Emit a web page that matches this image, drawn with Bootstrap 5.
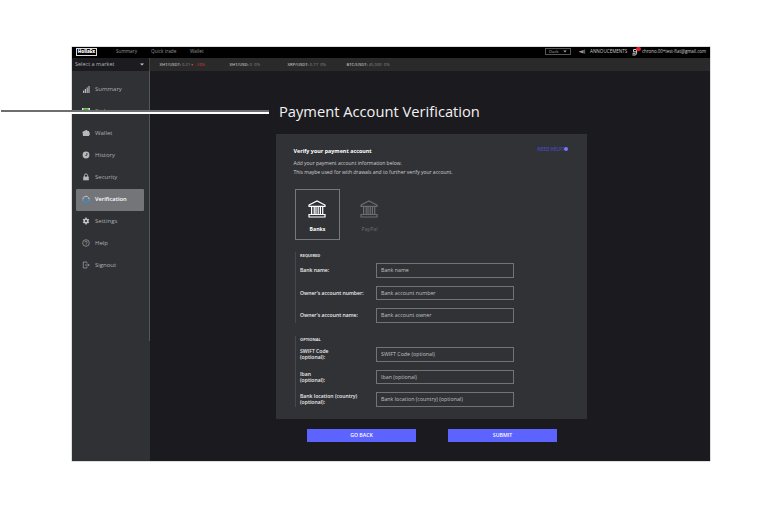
<!DOCTYPE html>
<html lang="en">
<head>
<meta charset="utf-8">
<meta name="viewport" content="width=device-width, initial-scale=1">
<title>Payment Account Verification</title>
<link href="https://cdn.jsdelivr.net/npm/bootstrap@5.3.0/dist/css/bootstrap.min.css" rel="stylesheet">
<style>
body{font-family:"Open Sans","Noto Sans",sans-serif;font-size:5px;line-height:7px;background:#fff;overflow:hidden;height:508px}
.frame{width:638px;height:414px;margin:47px 0 0 72px;background:#1b1a1f;color:#e4e4e5;box-shadow:0 0 0 .5px #bbb}
.topbar{height:11px;background:#000;color:#989898;padding:0 4px 2px}
.logo{width:21px;height:8px;border:1px solid #ddd;color:#fff;font-size:4.5px;font-weight:800;line-height:5.5px;text-align:center;margin-right:19px}
.topbar .lnk{font-size:4.7px;line-height:9px}
.lnk-a{width:35px}
.lnk-b{width:39px}
.theme{width:26px;height:7px;border:1px solid #555;font-size:4.3px;line-height:5px;padding:0 3px;color:#aaa}
.topbar #ann{margin-left:4px;width:42px;color:#ccc;font-size:4.6px}
.bell{width:9px;height:8px;line-height:0}
.bell i{position:absolute;left:4px;top:-1px;width:4.5px;height:4.5px;border-radius:50%;background:#e8202a}
.topbar #mail{width:64px;margin-left:1px;color:#ccc;white-space:nowrap;font-size:4.4px}
.ticker{height:13px;background:#2a2a2a;color:#8d8d8e;font-size:4.15px}
.market{width:78px;height:13px;background:#1c1b20;border-right:1px solid #444;font-size:5.5px;color:#b2b2b3;padding:0 5px 0 3px}
.tick{white-space:nowrap}
.tick b{color:#bbb;font-weight:600}
#t1{width:70px;margin-left:9.5px}
#t1 em{color:#e03b36;font-style:normal}
#t2{width:58px}
#t3{width:59px}
.side{width:78px;background:#303135;padding:7.5px 6px 0 4px;position:relative}
.side:after{content:"";position:absolute;right:0;top:0;width:1px;height:270px;background:#55565a}
.side .item{height:22px;padding:0 0 0 6px;font-size:6px;color:#adaeb0;border-radius:1px}
.side .item svg{width:8px;height:8px;margin-right:5px;margin-top:-2px;fill:#b7b8ba;flex:none}
.side .item.on{background:#747578;color:#fff;font-weight:600;font-size:5.7px}
.main{padding:0 0 0 126px}
h1{font-size:14.7px;line-height:20px;margin:30px 0 13px 3px;font-weight:400;color:#f2f2f2;white-space:nowrap}
.panel{width:311px;height:285px;background:#313236;padding:13px 19px 0 17.5px}
.panel h2{font-size:5.4px;line-height:8px;font-weight:700;color:#fff;margin:0}
.panel p{font-size:5px;line-height:9px;color:#cecfd0;margin:4px 0 0;white-space:nowrap}
.help{font-size:4.6px;color:#4c4ac8;line-height:4px;font-weight:600}
.help i{width:4px;height:4px;border-radius:50%;background:#7a79ff}
.tiles{margin:11.5px 0 12.5px 1.5px;gap:7px}
.tile{width:45px;height:51px;border:1px solid transparent;font-size:5.2px;padding-top:10px;color:#6c6d70}
.tile.on{border-color:#77787b;color:#fff;font-weight:700}
.tile svg{width:18px;height:18px;margin-bottom:9px;margin-left:-1px;fill:none;stroke:currentColor;stroke-width:1.2}
.tile span{line-height:5px}
.group{border-left:1px solid #47484c;padding-left:4px;margin-left:1.5px}
.group h3{font-size:4px;line-height:5px;font-weight:700;margin:0 0 5.5px;padding-top:.5px;color:#e2e2e3}
.g1{margin-bottom:13.5px}
.line{height:14.5px;margin-bottom:8px}
.group .line:last-child{margin-bottom:0}
.line label{width:76px;font-size:5.1px;line-height:6px;font-weight:600;color:#ececed;white-space:nowrap}
.field{width:138px;height:14.5px;border:1px solid #727376;font-size:5.3px;line-height:13.5px;padding:0 4px;color:#bfc0c2}
.actions{gap:32px;margin:10px 0 0 31px}
.go{width:109px;height:13px;background:#5c63ff;color:#fff;border:0;border-radius:0;font-size:5.2px;line-height:13px;padding:0;font-weight:600}
.pointer{position:absolute;left:1px;top:110px;width:268px;height:4px;background:linear-gradient(#6e6e6e 50%,#fff 50%)}
</style>
<script src="https://cdn.jsdelivr.net/npm/bootstrap@5.3.0/dist/js/bootstrap.bundle.min.js"></script>
</head>
<body class="d-flex flex-column">
<div class="frame d-flex flex-column">
  <nav class="topbar d-flex align-items-center">
    <div class="logo">HollaEx</div>
    <span class="lnk lnk-a">Summary</span><span class="lnk lnk-b">Quick trade</span><span class="lnk">Wallet</span>
    <div class="theme d-flex justify-content-between align-items-center ms-auto"><span>Dark</span><svg width="4" height="3" viewBox="0 0 4 3" fill="#aaa"><path d="M.3.4h3.4L2 2.6z"/></svg></div>
    <svg width="7" height="6" viewBox="0 0 7 6" class="ms-2" fill="#999"><path d="M0 2.5 4.6 1v3.6L0 3.1zM5.4.6h.7v4.2h-.7z"/></svg>
    <span class="lnk" id="ann">ANNOUCEMENTS</span>
    <span class="position-relative bell"><svg width="7" height="8" viewBox="0 0 7 8" fill="none" stroke="#ccc"><path d="M1.5 1.5h3v2.3h-3zM4.6 1v4.5L3.6 7H.4M.5 5.3h3"/></svg><i></i></span>
    <span class="lnk" id="mail">chrono.00+test-fiat@gmail.com</span>
  </nav>
  <div class="ticker d-flex align-items-center">
    <div class="market d-flex align-items-center justify-content-between"><span>Select a market</span><svg width="4" height="3" viewBox="0 0 4 3" fill="#ccc"><path d="M0 .4h4L2 2.6z"/></svg></div>
    <span class="tick" id="t1"><b>XHT/USDT:</b> 0.21 <em>▾ &nbsp;-16%</em></span>
    <span class="tick" id="t2"><b>XHT/USD:</b> 0 &nbsp;0%</span>
    <span class="tick" id="t3"><b>XRP/USDT:</b> 0.77 &nbsp;0%</span>
    <span class="tick" id="t4"><b>BTC/USDT:</b> 45,000 &nbsp;0%</span>
  </div>
  <div class="d-flex flex-grow-1">
    <aside class="side">
      <div class="item d-flex align-items-center"><svg viewBox="0 0 8 8"><path d="M1 5.5h1.2V8H1zM2.8 4H4v4H2.8zM4.6 2.5h1.2V8H4.6zM6.4 1h1.2v7H6.4z"/></svg>Summary</div>
      <div class="item d-flex align-items-center"><svg viewBox="0 0 8 8"><path fill="#cfe3ee" d="M0 1h8v5H0z"/><path fill="#4fa825" d="M1.3 1.3h5.2V6H1.3z"/><path fill="#17220f" d="M3 3.5h2V6H3z"/></svg>Stake</div>
      <div class="item d-flex align-items-center"><svg viewBox="0 0 8 8"><path d="M.5 2.8 4.8.8l.8 1.3H7v1.2h.7v3H7V7H1z"/></svg>Wallet</div>
      <div class="item d-flex align-items-center"><svg viewBox="0 0 8 8"><circle cx="4" cy="4" r="3.4"/><path d="M4.9 2v2.2L3.4 4.6" fill="none" stroke="#303135" stroke-width=".9"/></svg>History</div>
      <div class="item d-flex align-items-center"><svg viewBox="0 0 8 8"><path d="M1.2 3.6h5.6v3.7H1.2z"/><path d="M2.4 4V2.5a1.6 1.6 0 0 1 3.2 0V4" fill="none" stroke="#b7b8ba" stroke-width=".9"/></svg>Security</div>
      <div class="item on d-flex align-items-center"><svg viewBox="0 0 8 8"><g fill="none"><path d="M1 5.6A3.2 3.2 0 1 1 7 5.6" stroke="#bcc8d0" stroke-width="1"/><path d="M.8 4A3.2 3.2 0 0 0 7.2 4" stroke="#2a91d6" stroke-width="1.2"/></g></svg>Verification</div>
      <div class="item d-flex align-items-center"><svg viewBox="0 0 8 8"><circle cx="4" cy="4" r="1.9" fill="none" stroke="#c6c7c9" stroke-width="1.4"/><path d="M4 .6v6.8M1.1 2.3l5.8 3.4M1.1 5.7l5.8-3.4" stroke="#c6c7c9" stroke-width="1.3"/><circle cx="4" cy="4" r="1.1" fill="#303135"/></svg>Settings</div>
      <div class="item d-flex align-items-center"><svg viewBox="0 0 8 8"><g fill="none" stroke="#a5a6a8" stroke-width=".7"><circle cx="4" cy="4" r="3.3"/><path d="M2.9 3.2c0-1.5 2.3-1.4 2.3 0 0 .8-1.1.8-1.1 1.6M4.1 5.4v.7"/></g></svg>Help</div>
      <div class="item d-flex align-items-center"><svg viewBox="0 0 8 8"><path d="M4.8 2.3V1H1.3v6h3.5V5.6M3 4h4.2M5.9 2.7 7.2 4 5.9 5.3" fill="none" stroke="#a5a6a8" stroke-width=".7"/></svg>Signout</div>
    </aside>
    <main class="main">
      <h1>Payment Account Verification</h1>
      <section class="panel">
        <div class="d-flex justify-content-between align-items-start">
          <div><h2>Verify your payment account</h2>
          <p>Add your payment account information below.<br>This maybe used for with drawals and to further verify your account.</p></div>
          <div class="help d-flex align-items-center"><span>NEED HELP?</span><i></i></div>
        </div>
        <div class="tiles d-flex">
          <div class="tile on d-flex flex-column align-items-center"><svg viewBox="0 0 18 18"><path d="M1 5 9 1l8 4v1.3H1zM3.6 6.5v8M6.2 6.5v8M8 6.5v8M10.2 6.5v8M12.4 6.5v8M14.7 6.5v8M1 14.5h16V17H1z"/></svg><span>Banks</span></div>
          <div class="tile d-flex flex-column align-items-center"><svg viewBox="0 0 18 18"><path d="M1 5 9 1l8 4v1.3H1zM3.6 6.5v8M6.2 6.5v8M8 6.5v8M10.2 6.5v8M12.4 6.5v8M14.7 6.5v8M1 14.5h16V17H1z"/></svg><span>PayPal</span></div>
        </div>
        <div class="group g1"><h3>REQUIRED</h3>
          <div class="line d-flex align-items-center"><label>Bank name:</label><div class="field">Bank name</div></div>
          <div class="line d-flex align-items-center"><label>Owner's account number:</label><div class="field">Bank account number</div></div>
          <div class="line d-flex align-items-center"><label>Owner's account name:</label><div class="field">Bank account owner</div></div>
        </div>
        <div class="group g2"><h3>OPTIONAL</h3>
          <div class="line d-flex align-items-center"><label>SWIFT Code<br>(optional):</label><div class="field">SWIFT Code (optional)</div></div>
          <div class="line d-flex align-items-center"><label>Iban<br>(optional):</label><div class="field">Iban (optional)</div></div>
          <div class="line d-flex align-items-center"><label>Bank location (country)<br>(optional):</label><div class="field">Bank location (country) (optional)</div></div>
        </div>
      </section>
      <div class="actions d-flex"><button class="btn go">GO BACK</button><button class="btn go">SUBMIT</button></div>
    </main>
  </div>
</div>
<div class="pointer"></div>
</body>
</html>
